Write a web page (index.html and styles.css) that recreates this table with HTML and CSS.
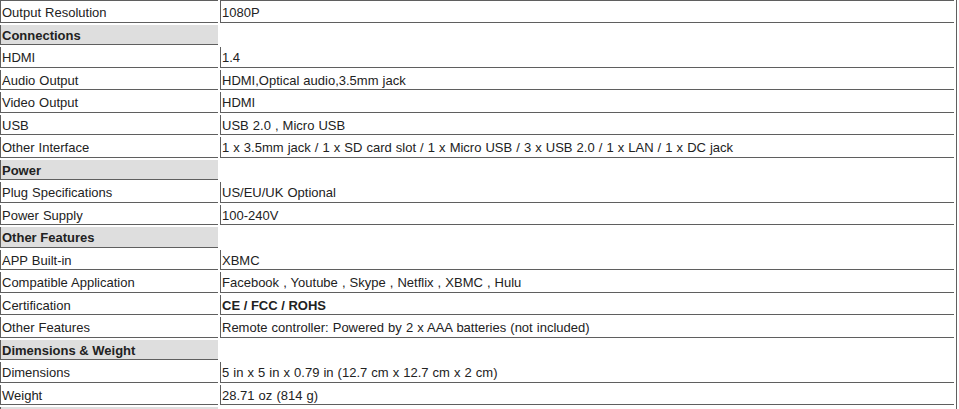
FILE: index.html
```html
<!DOCTYPE html>
<html lang="en">
<head>
<meta charset="utf-8">
<title>Specifications</title>
<link rel="stylesheet" href="styles.css">
</head>
<body>
<table class="spec">
  <tbody>
    <tr class="first"><td class="label">Output Resolution</td><td class="value">1080P</td></tr>
    <tr><td class="label head">Connections</td><td class="blank"></td></tr>
    <tr><td class="label">HDMI</td><td class="value">1.4</td></tr>
    <tr><td class="label">Audio Output</td><td class="value">HDMI,Optical audio,3.5mm jack</td></tr>
    <tr><td class="label">Video Output</td><td class="value">HDMI</td></tr>
    <tr><td class="label">USB</td><td class="value">USB 2.0 , Micro USB</td></tr>
    <tr><td class="label">Other Interface</td><td class="value">1 x 3.5mm jack / 1 x SD card slot / 1 x Micro USB / 3 x USB 2.0 / 1 x LAN / 1 x DC jack</td></tr>
    <tr><td class="label head">Power</td><td class="blank"></td></tr>
    <tr><td class="label">Plug Specifications</td><td class="value">US/EU/UK Optional</td></tr>
    <tr><td class="label">Power Supply</td><td class="value">100-240V</td></tr>
    <tr><td class="label head">Other Features</td><td class="blank"></td></tr>
    <tr><td class="label">APP Built-in</td><td class="value">XBMC</td></tr>
    <tr><td class="label">Compatible Application</td><td class="value">Facebook , Youtube , Skype , Netflix , XBMC , Hulu</td></tr>
    <tr><td class="label">Certification</td><td class="value"><strong>CE / FCC / ROHS</strong></td></tr>
    <tr><td class="label">Other Features</td><td class="value">Remote controller: Powered by 2 x AAA batteries (not included)</td></tr>
    <tr><td class="label head">Dimensions &amp; Weight</td><td class="blank"></td></tr>
    <tr><td class="label">Dimensions</td><td class="value">5 in x 5 in x 0.79 in (12.7 cm x 12.7 cm x 2 cm)</td></tr>
    <tr><td class="label">Weight</td><td class="value">28.71 oz (814 g)</td></tr>
    <tr><td class="label head">&nbsp;</td><td class="blank"></td></tr>
  </tbody>
</table>
</body>
</html>
```
FILE: styles.css
```css
html, body {
  margin: 0;
  padding: 0;
  background: #ffffff;
  overflow: hidden;
}

.spec {
  width: 959px;
  margin: -2px 0 0 -2px;
  table-layout: fixed;
  border-collapse: separate;
  border-spacing: 2px;
  border-right: 1px solid #5f5f5f;
  font-family: "Liberation Sans", Arial, sans-serif;
  font-size: 13px;
  color: #222222;
}

.spec td {
  padding: 3px 1px 1px 1px;
  line-height: 15.5px;
  border-left: 1px solid #5f5f5f;
  border-bottom: 1px solid #5f5f5f;
  text-align: left;
  vertical-align: middle;
  white-space: nowrap;
  letter-spacing: 0;
  word-spacing: 0.45px;
}

.spec .label {
  width: 218px;
  box-sizing: border-box;
}

.spec .first td {
  border-top: 1px solid #5f5f5f;
  padding-top: 4px;
}

.spec .head {
  background: #dedede;
  font-weight: bold;
  letter-spacing: 0;
  word-spacing: 0;
}

.spec td.blank {
  border: none;
  background: transparent;
}

.spec strong {
  font-weight: bold;
  letter-spacing: 0;
  word-spacing: 0;
}
```
